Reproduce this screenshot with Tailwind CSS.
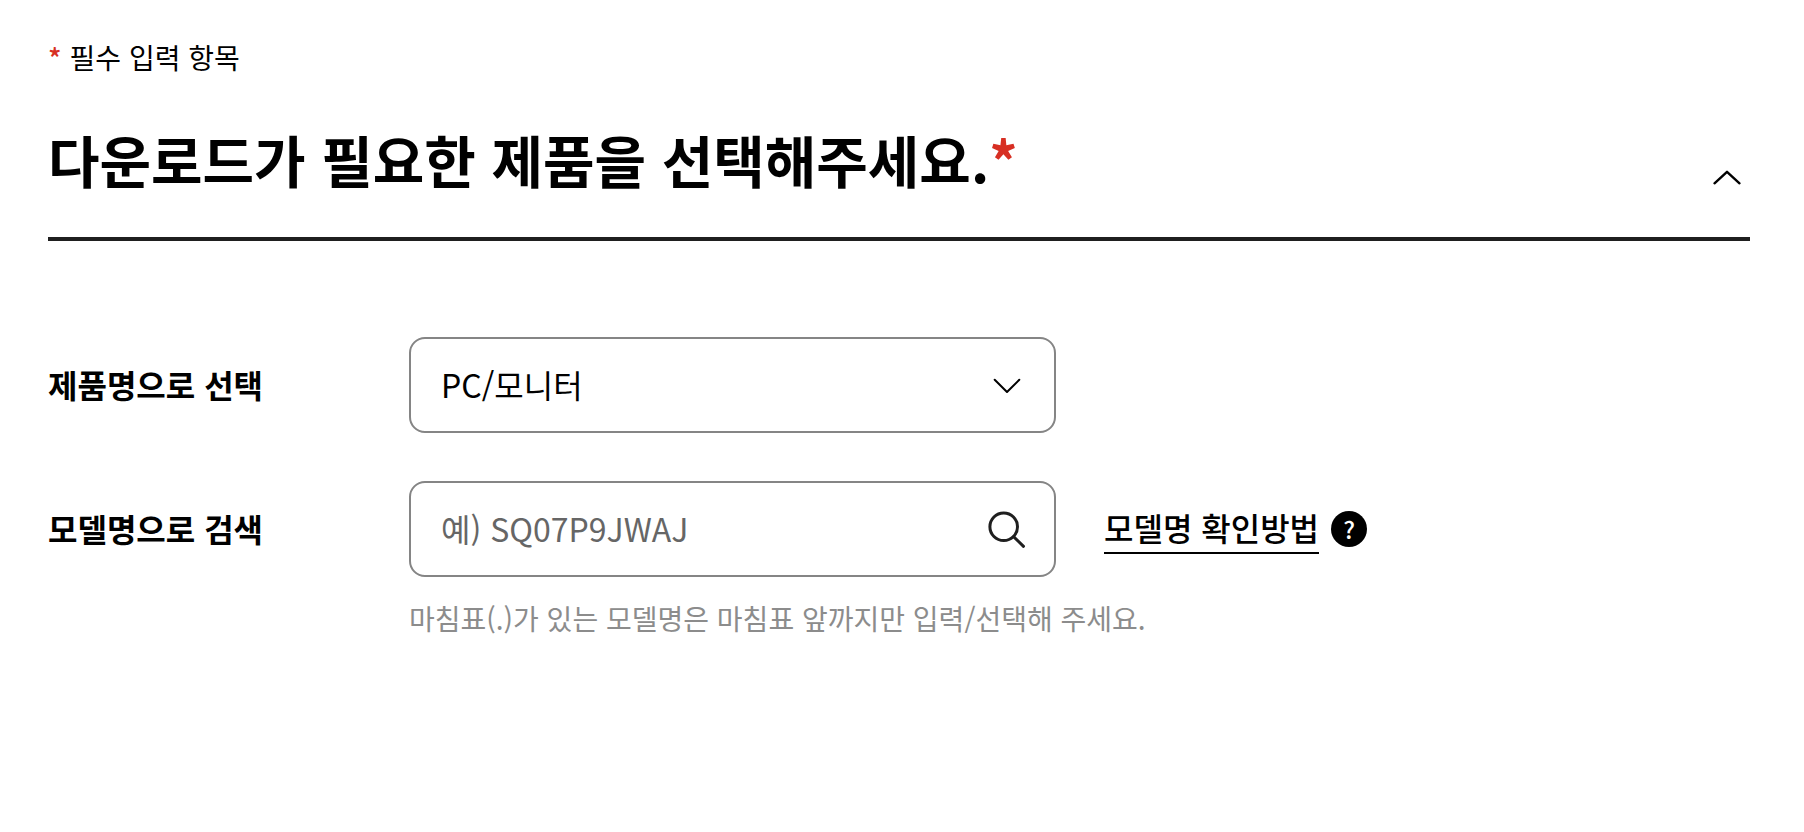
<!DOCTYPE html>
<html lang="ko">
<head>
  <meta charset="utf-8">
  <meta name="viewport" content="width=device-width, initial-scale=1">
  <title>다운로드 제품 선택</title>
  <script src="https://cdn.jsdelivr.net/npm/@tailwindcss/browser@4"></script>
  <style>
    body { font-family: "Noto Sans CJK KR", sans-serif; }
  </style>
</head>
<body class="bg-white text-black">
  <main class="pl-12 pr-[54px] pt-[35px]">

    <!-- Required notice -->
    <p class="flex items-center gap-2 text-[28px] leading-[44px]"><span class="font-medium text-[#d72f23]">*</span>필수 입력 항목</p>

    <!-- Section title -->
    <header class="mt-[42px] flex items-start justify-between border-b-4 border-[#1f1f1f] pb-9">
      <h2 class="text-[56px] leading-[76px] font-bold">다운로드가 필요한 제품을 선택해주세요.<span class="text-[#d72f23]">*</span></h2>
      <button type="button" aria-label="접기" class="mt-8 p-2">
        <svg class="h-8 w-8" viewBox="0 0 32 32" fill="none" stroke="#000" stroke-width="2.4" stroke-linecap="round" stroke-linejoin="round"><path d="M4.5 22.3 17 10.8l12.500 11.500"/></svg>
      </button>
    </header>

    <form class="mt-24 grid grid-cols-[361px_1fr] gap-y-12">
      <label for="product" class="text-[32px] leading-[94px] font-bold">제품명으로 선택</label>
      <div class="relative w-[647px]">
        <select id="product" class="h-24 w-full appearance-none rounded-2xl border-2 border-[#858585] bg-white px-[30px] pb-0.5 text-[32px]">
          <option>PC/모니터</option>
        </select>
        <svg class="pointer-events-none absolute top-8 right-8 h-8 w-8" viewBox="0 0 32 32" fill="none" stroke="#000" stroke-width="2" stroke-linecap="round" stroke-linejoin="round"><path d="M2.700 10.800 15 23 27.300 10.800"/></svg>
      </div>

      <label for="model" class="text-[32px] leading-[94px] font-bold">모델명으로 검색</label>
      <div>
        <div class="flex items-center gap-12">
          <div class="relative w-[647px]">
            <input id="model" type="text" placeholder="예) SQ07P9JWAJ" class="h-24 w-full rounded-2xl border-2 border-[#858585] px-[30px] pb-0.5 text-[32px] placeholder:text-[#666]">
            <button type="button" aria-label="검색" class="absolute top-7 right-7">
              <svg class="h-10 w-10" viewBox="0 0 40 40" fill="none" stroke="#1f1f1f" stroke-width="3" stroke-linecap="round"><circle cx="15.700" cy="17.700" r="13.800"/><path d="m25.600 27.700 9.900 9.600"/></svg>
            </button>
          </div>
          <a href="#" class="flex items-center gap-3 text-[32px] leading-[46px] font-medium"><span class="border-b-2 border-black pb-0.5">모델명 확인방법</span>
            <span class="flex h-9 w-9 items-center justify-center rounded-full bg-black text-2xl font-medium text-white">?</span>
          </a>
        </div>
        <p class="mt-[19px] text-[28px] leading-[44px] text-[#8c8c8c]">마침표(.)가 있는 모델명은 마침표 앞까지만 입력/선택해 주세요.</p>
      </div>
    </form>
  </main>
</body>
</html>
